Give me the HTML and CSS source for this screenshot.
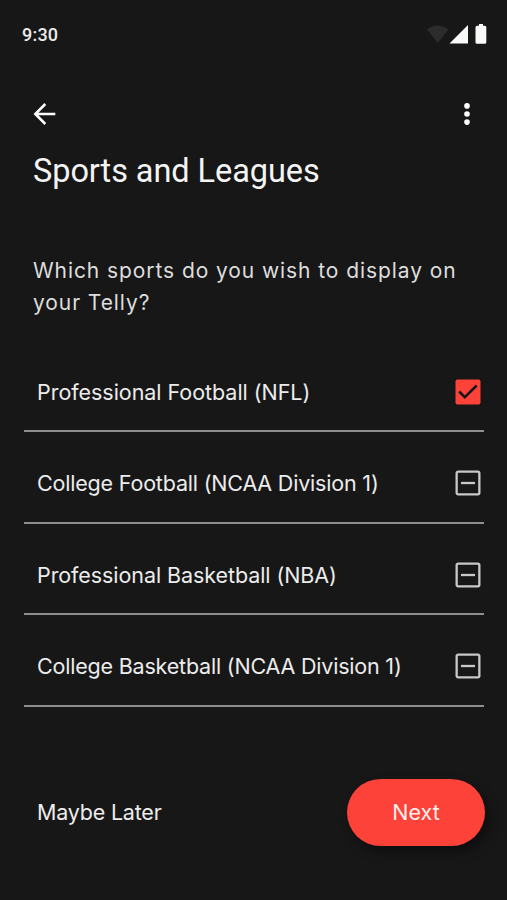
FILE: index.html
```html
<!DOCTYPE html>
<html lang="en">
<head>
<meta charset="utf-8">
<title>Sports and Leagues</title>
<link rel="stylesheet" href="styles.css">
</head>
<body>
<div class="screen">
  <div class="status">
    <span class="time">9:30</span>
    <svg class="status-icons" width="60" height="22" viewBox="0 0 60 22">
      <path d="M0 5.500Q10.500-2.500 21.500 5.500L10.800 19Z" fill="#2c2c2c"/>
      <path d="M22.500 19.500H41V1Z" fill="#f8faf8"/>
      <path d="M52 0h4v1.800h1.800q1.500 0 1.500 1.500v15q0 1.500-1.500 1.500h-7.800q-1.500 0-1.500-1.500v-15q0-1.500 1.500-1.500h2z" fill="#f8faf8"/>
    </svg>
  </div>
  <header class="bar">
    <svg width="24" height="24" viewBox="0 0 24 24" fill="none" stroke="#fff" stroke-width="2.500"><path d="M22.300 12H3M12.300 2L2.300 12l10 10"/></svg>
    <svg width="8" height="24" viewBox="0 0 8 24" fill="#fff"><circle cx="4" cy="3.900" r="2.800"/><circle cx="4" cy="12" r="2.800"/><circle cx="4" cy="20.100" r="2.800"/></svg>
  </header>
  <h1>Sports and Leagues</h1>
  <p class="question">Which sports do you wish to display on<br>your Telly?</p>
  <ul class="list">
    <li><span class="label nfl">Professional Football (NFL)</span><svg class="box" viewBox="0 0 26 26"><rect x=".5" y=".5" width="25" height="25" rx="2" fill="#fc4239"/><path d="M4.200 12.500l5.600 5.700L21.700 6.500" fill="none" stroke="#171717" stroke-width="2.500"/></svg></li>
    <li><span class="label ncaaf">College Football (NCAA Division 1)</span><svg class="box" viewBox="0 0 26 26" fill="none" stroke="#c8c8c8" stroke-width="2.300"><rect x="1.650" y="1.650" width="22.700" height="22.700" rx="1.500"/><path d="M6 13h14"/></svg></li>
    <li><span class="label nba">Professional Basketball (NBA)</span><svg class="box" viewBox="0 0 26 26" fill="none" stroke="#c8c8c8" stroke-width="2.300"><rect x="1.650" y="1.650" width="22.700" height="22.700" rx="1.500"/><path d="M6 13h14"/></svg></li>
    <li><span class="label ncaab">College Basketball (NCAA Division 1)</span><svg class="box" viewBox="0 0 26 26" fill="none" stroke="#c8c8c8" stroke-width="2.300"><rect x="1.650" y="1.650" width="22.700" height="22.700" rx="1.500"/><path d="M6 13h14"/></svg></li>
  </ul>
  <footer class="actions">
    <button class="later">Maybe Later</button>
    <button class="next">Next</button>
  </footer>
</div>
</body>
</html>
```
FILE: styles.css
```css
* { box-sizing: border-box; }
body { margin: 0; background: #171717; color: #ececec; font-family: Inter, "Liberation Sans", sans-serif; }
.screen { width: 507px; height: 900px; overflow: hidden; display: flex; flex-direction: column; }
.status { height: 69px; padding: 0 20px 0 22px; display: flex; align-items: center; justify-content: space-between; font: 500 18px Roboto, sans-serif; letter-spacing: .2px; }
.status-icons { margin-top: 1px; }
.bar { height: 90px; padding: 0 36px 0 32.500px; display: flex; align-items: center; justify-content: space-between; }
h1 { margin: -9px 0 0; padding-left: 33px; height: 42px; font: 400 32.500px/42px Roboto, sans-serif; letter-spacing: -.07px; color: #f4f4f4; }
.question { margin: 63px 0 0; padding-left: 33px; height: 64px; font-size: 21px; line-height: 32px; letter-spacing: .920px; color: #dedede; white-space: nowrap; }
.list { list-style: none; margin: 21.400px 23px 0 24px; padding: 0; }
.list li { height: 91.600px; padding: 13px 3px 0 13px; border-bottom: 2px solid #8e8e8e; display: flex; align-items: center; justify-content: space-between; }
.label { font-size: 21.500px; white-space: nowrap; }
.nfl { letter-spacing: -.04px; }
.ncaaf { letter-spacing: -.190px; }
.nba { letter-spacing: -.080px; }
.ncaab { letter-spacing: -.200px; }
.box { width: 26px; height: 26px; }
.actions { margin-top: 72px; padding: 0 22px 0 37px; display: flex; align-items: center; justify-content: space-between; }
button { border: 0; padding: 0 0 1px; background: none; font: 400 21.500px Inter, sans-serif; color: #ececec; }
.later { letter-spacing: -.2px; }
.next { width: 138px; height: 67px; border-radius: 34px; background: #fc4239; color: #fff0ee; box-shadow: 5px 6px 12px rgba(0,0,0,.4); }
```
